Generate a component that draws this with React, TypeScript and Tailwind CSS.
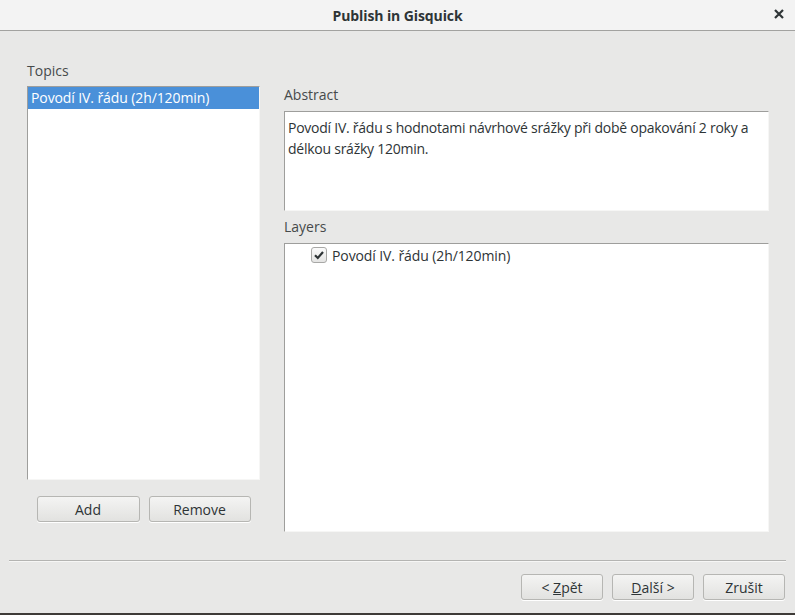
import React from "react";

const Button = ({ children, className = "" }: { children: React.ReactNode; className?: string }) => (
  <button
    className={
      "h-[26px] rounded-[3px] border border-[#b6b6b3] bg-gradient-to-b from-[#f4f4f3] to-[#e2e2e0] text-[14px] text-[#2e3436] shadow-[0_1px_0_#ffffff] " +
      className
    }
  >
    {children}
  </button>
);

const App = () => {
  return (
    <div
      className="w-[795px] h-[615px] flex flex-col bg-[#e8e8e7] text-[#2e3436] overflow-hidden"
      style={{ fontFamily: '"Open Sans", "Noto Sans", sans-serif' }}
    >
      {/* title bar */}
      <div className="h-[31px] shrink-0 flex items-center justify-center relative bg-[#f3f3f3] border-b border-[#a2a2a0]">
        <span className="text-[14px] font-bold text-[#2e3436] tracking-[-0.1px]">Publish in Gisquick</span>
        <span className="absolute right-[10px] top-[5px] leading-none">
          <svg width="12" height="12" viewBox="0 0 12 12" className="mt-[3px]">
            <path d="M2 2 L10 10 M10 2 L2 10" stroke="#2e3436" strokeWidth="2.2" />
          </svg>
        </span>
      </div>

      {/* body */}
      <div className="flex-1 flex flex-col pt-[31px]">
        <div className="flex h-[470px] pl-[27px] pr-[26px] gap-[24px]">
          {/* topics */}
          <div className="w-[233px] flex flex-col">
            <div className="h-[18px] leading-[18px] text-[14px] text-[#464a4b]">Topics</div>
            <div className="mt-[6px] h-[394px] bg-white border-t border-l border-[#9e9e9c] border-r border-b border-r-[#f6f6f5] border-b-[#f6f6f5]">
              <div className="h-[22px] leading-[22px] pl-[3px] bg-[#4a90d9] text-white text-[14px] tracking-[-0.1px]">
                Povodí IV. řádu (2h/120min)
              </div>
            </div>
            <div className="mt-[16px] flex justify-center gap-[9px]">
              <Button className="w-[103px]">Add</Button>
              <Button className="w-[102px]">Remove</Button>
            </div>
          </div>

          {/* abstract + layers */}
          <div className="flex-1 flex flex-col pt-[24px]">
            <div className="h-[18px] leading-[18px] text-[14px] text-[#464a4b]">Abstract</div>
            <div className="mt-[7px] h-[100px] bg-white border-t border-l border-[#9e9e9c] border-r border-b border-r-[#f6f6f5] border-b-[#f6f6f5] px-[3px] pt-[5px] text-[14px] leading-[21px] tracking-[-0.25px] whitespace-nowrap">
              Povodí IV. řádu s hodnotami návrhové srážky při době opakování 2 roky a
              <br />
              délkou srážky 120min.
            </div>
            <div className="mt-[7px] h-[18px] leading-[18px] text-[14px] text-[#464a4b]">Layers</div>
            <div className="mt-[7px] flex-1 bg-white border-t border-l border-[#9e9e9c] border-r border-b border-r-[#f6f6f5] border-b-[#f6f6f5]">
              <div className="flex items-center h-[22px] pl-[26px]">
                <div className="w-[16px] h-[16px] rounded-[3px] border border-[#a8a8a6] bg-gradient-to-b from-[#fbfbfb] to-[#e4e4e3] flex items-center justify-center">
                  <svg width="12" height="12" viewBox="0 0 12 12">
                    <path d="M2 6.2 L4.8 9 L10 3" fill="none" stroke="#2e3436" strokeWidth="2.2" />
                  </svg>
                </div>
                <span className="ml-[5px] text-[14px] tracking-[-0.1px]">Povodí IV. řádu (2h/120min)</span>
              </div>
            </div>
          </div>
        </div>

        {/* separator */}
        <div className="mt-[28px] mx-[9px] h-[2px] border-t border-[#b4b4b2] border-b border-b-[#f6f6f5]" />

        {/* dialog buttons */}
        <div className="mt-[12px] flex justify-end gap-[9px] pr-[10px]">
          <Button className="w-[82px]">
            &lt; <span className="underline">Z</span>pět
          </Button>
          <Button className="w-[82px]">
            <span className="underline">D</span>alší &gt;
          </Button>
          <Button className="w-[82px]">Zrušit</Button>
        </div>
        <div className="flex-1" />
        <div className="h-[2px] bg-[#3e3b38]" />
      </div>
    </div>
  );
};

export default App;
